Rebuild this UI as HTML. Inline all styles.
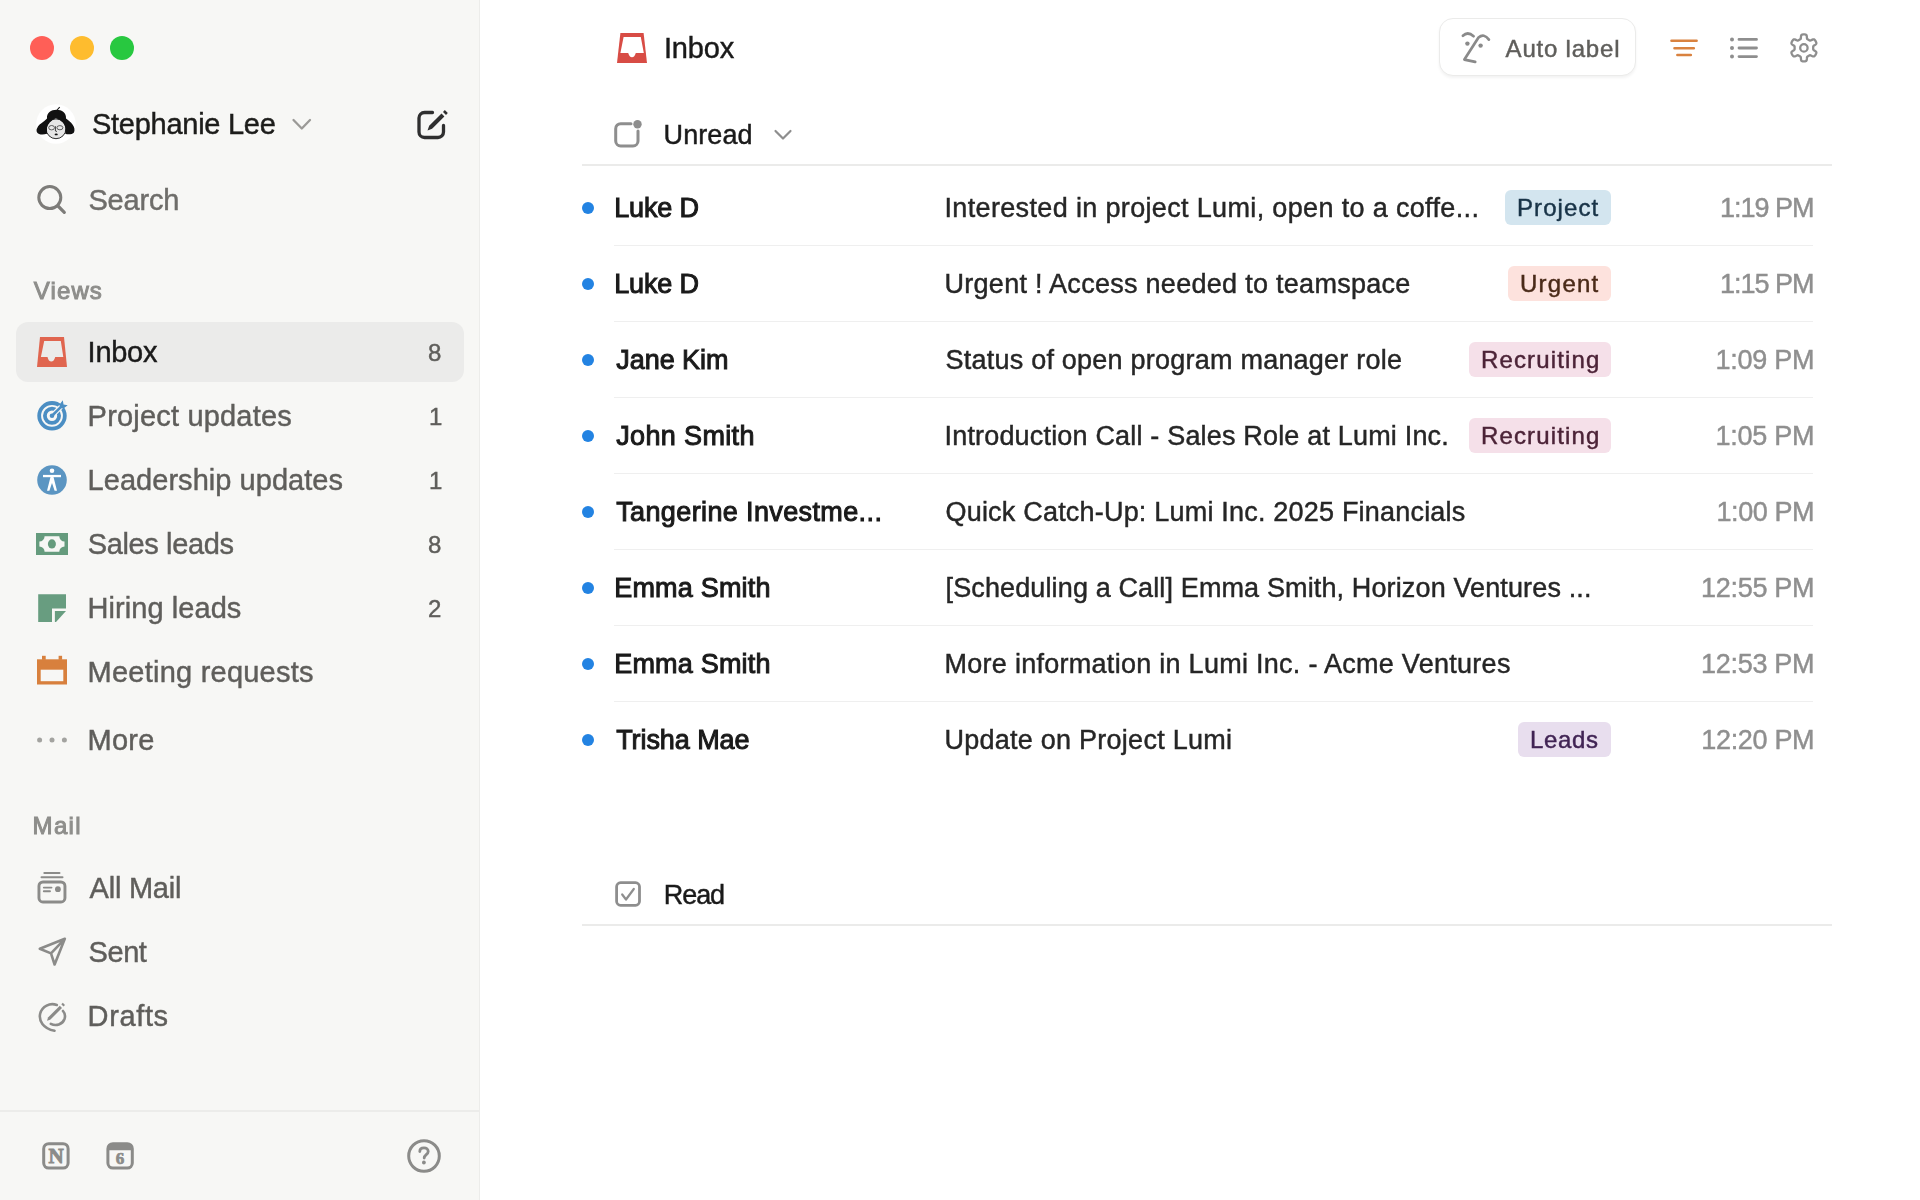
<!DOCTYPE html>
<html>
<head>
<meta charset="utf-8">
<title>Inbox</title>
<style>
html,body{margin:0;padding:0;width:1920px;height:1200px;overflow:hidden;background:#ffffff;}
body{position:relative;font-family:"Liberation Sans",sans-serif;}
.t{position:absolute;white-space:nowrap;font-family:"Liberation Sans",sans-serif;}
.bg{position:absolute;}
#sidebar{left:0;top:0;width:479px;height:1200px;background:#f7f7f5;}
#sideborder{left:479px;top:0;width:1px;height:1200px;background:#ececea;}
#sidesep{left:0;top:1110px;width:479px;height:2px;background:#ececea;}
#sel{left:16px;top:322px;width:448px;height:60px;border-radius:12px;background:#ebebea;}
#autobtn{left:1439px;top:18px;width:195px;height:55.5px;border-radius:14px;background:#fff;border:1.5px solid #ebebea;box-shadow:0 2px 3px rgba(0,0,0,0.05);}
.hline{position:absolute;left:582px;width:1250px;height:2px;background:#ebebea;}
.rline{position:absolute;left:614px;width:1199px;height:1px;background:#efefef;}
.dot{position:absolute;left:582px;width:12px;height:12px;border-radius:6px;background:#2383e2;}
.tag{position:absolute;height:35px;border-radius:6px;}
svg{position:absolute;left:0;top:0;}
</style>
</head>
<body>
<div class="bg" id="sidebar"></div>
<div class="bg" id="sideborder"></div>
<div class="bg" id="sidesep"></div>
<div class="bg" id="sel"></div>
<div class="bg" id="autobtn"></div>
<div class="hline" style="top:164px"></div>
<div class="hline" style="top:924px"></div>
<div class="dot" style="top:202px"></div>
<div class="rline" style="top:245px"></div>
<div class="tag" style="left:1505.0px;top:189.5px;width:105.8px;background:#d3e5ef"></div>
<div class="dot" style="top:278px"></div>
<div class="rline" style="top:321px"></div>
<div class="tag" style="left:1508.4px;top:265.5px;width:102.4px;background:#fde2dd"></div>
<div class="dot" style="top:354px"></div>
<div class="rline" style="top:397px"></div>
<div class="tag" style="left:1469.2px;top:341.5px;width:141.5px;background:#f5e0e9"></div>
<div class="dot" style="top:430px"></div>
<div class="rline" style="top:473px"></div>
<div class="tag" style="left:1469.2px;top:417.5px;width:141.5px;background:#f5e0e9"></div>
<div class="dot" style="top:506px"></div>
<div class="rline" style="top:549px"></div>
<div class="dot" style="top:582px"></div>
<div class="rline" style="top:625px"></div>
<div class="dot" style="top:658px"></div>
<div class="rline" style="top:701px"></div>
<div class="dot" style="top:734px"></div>
<div class="tag" style="left:1518.0px;top:721.5px;width:92.8px;background:#e8deee"></div>
<svg width="1920" height="1200" viewBox="0 0 1920 1200">
<!-- traffic lights -->
<circle cx="42" cy="48" r="12" fill="#ff5f57"/>
<circle cx="82" cy="48" r="12" fill="#febc2e"/>
<circle cx="122" cy="48" r="12" fill="#28c840"/>
<!-- avatar -->
<circle cx="56" cy="124" r="19.8" fill="#ffffff"/>
<ellipse cx="56" cy="128.8" rx="9.9" ry="9.9" fill="#e6e6e6" stroke="#151515" stroke-width="0.9"/>
<path d="M39 134 C36.5 133 36 130 37 128.5 C38 125 41 123.5 43 122 C45 120.5 46 119.5 47 118.5 C46.5 113 51 109.8 56.5 109.8 C62 109.8 66.5 113 66 118.5 C68 120 71 122 72.5 124.5 C74.5 127 75 130 74 132.5 C72.5 134.5 68 134.8 65.2 133.8 L65.4 127.5 C64.5 123 61 120 55.8 118.2 C51 120.5 48 123.5 47 127.5 L47 133.8 C44 134.8 41 134.8 39 134 Z" fill="#111"/>
<path d="M57.1 110 L59.7 107.1" stroke="#111" stroke-width="1.1" fill="none"/>
<ellipse cx="51.6" cy="127.7" rx="2.9" ry="2.2" fill="none" stroke="#333" stroke-width="0.75"/>
<ellipse cx="59.9" cy="127.7" rx="3" ry="2.1" fill="none" stroke="#333" stroke-width="0.75"/>
<path d="M55.6 126.2 L55.4 131 L57 131.5" stroke="#222" stroke-width="0.8" fill="none"/>
<ellipse cx="56.2" cy="134.4" rx="1.6" ry="0.85" fill="#111"/>
<!-- name chevron -->
<path d="M293.5 120 L301.8 128.5 L310 120" fill="none" stroke="#9b9a97" stroke-width="2.3" stroke-linecap="round" stroke-linejoin="round"/>
<!-- compose -->
<path d="M432.5 112.5 H424.5 a5.5 5.5 0 0 0 -5.5 5.5 V132 a5.5 5.5 0 0 0 5.5 5.5 H438 a5.5 5.5 0 0 0 5.5 -5.5 V125.5" fill="none" stroke="#2f2f2f" stroke-width="3.3" stroke-linecap="round"/>
<path d="M427.5 130.5 L429.2 125.8 L441.5 113.5 L444.4 116.4 L432.1 128.7 Z" fill="#2f2f2f"/>
<path d="M443 111.9 L444.8 110.1 L447.8 113.1 L446 114.9 Z" fill="#2f2f2f"/>
<!-- search -->
<circle cx="49.8" cy="197.6" r="11" fill="none" stroke="#7d7c79" stroke-width="3"/>
<path d="M58 206 L64.3 212.3" stroke="#7d7c79" stroke-width="3.2" stroke-linecap="round"/>
<!-- sidebar inbox icon -->
<path d="M40 337 H64 L67 367 H37 Z" fill="#e0654f"/>
<path d="M44.2 341 H60.8 L63.3 357 H55.2 Q54 361.5 51.3 361.5 Q48.6 361.5 47.5 357 H40.9 Z" fill="#ebebea"/>
<!-- project updates target -->
<circle cx="52" cy="415.8" r="12.8" fill="none" stroke="#4b8ec3" stroke-width="3.8"/>
<circle cx="52" cy="415.8" r="7.1" fill="none" stroke="#4b8ec3" stroke-width="3.8"/>
<path d="M54.5 413.3 L61 406.8" stroke="#f7f7f5" stroke-width="5" stroke-linecap="butt"/>
<circle cx="52" cy="415.8" r="2.3" fill="#4b8ec3"/>
<path d="M53.3 414.5 L61.5 406.3" stroke="#4b8ec3" stroke-width="2.5" stroke-linecap="round"/>
<path d="M59.8 404.2 L62.8 400.3 L63.5 404.5 L67.7 405.2 L63.8 408.2 L59.8 408.2 Z" fill="#4b8ec3"/>
<!-- leadership -->
<circle cx="52" cy="480" r="14.8" fill="#5b95c2"/>
<circle cx="52" cy="470.8" r="2.3" fill="#fff"/>
<rect x="43" y="474.9" width="18" height="2.3" fill="#fff"/>
<path d="M50.5 477 H53.5 L57 490.8 H54.6 L52 483 L49.4 490.8 H47 Z" fill="#fff"/>
<!-- sales leads -->
<rect x="36" y="533" width="32" height="22" fill="#659b7d"/>
<path d="M44.6 536.3 H59.3 A5.2 5.2 0 0 0 64.5 541.5 V546.5 A5.2 5.2 0 0 0 59.3 551.7 H44.6 A5.2 5.2 0 0 0 39.4 546.5 V541.5 A5.2 5.2 0 0 0 44.6 536.3 Z" fill="#f7f7f5"/>
<ellipse cx="51.9" cy="543.9" rx="4" ry="4.6" fill="#659b7d"/>
<!-- hiring leads -->
<path d="M38.2 594.2 H66 V608.4 H52 V622 H38.2 Z" fill="#689d80"/>
<path d="M54.9 611 H66 L56 622 H54.9 Z" fill="#689d80"/>
<!-- meeting requests -->
<rect x="37" y="659.3" width="30" height="25.2" fill="#d8803d"/>
<rect x="42" y="655.8" width="3.7" height="4" fill="#d8803d"/>
<rect x="58.6" y="655.8" width="3.5" height="4" fill="#d8803d"/>
<rect x="40.7" y="669.7" width="22.6" height="11.5" fill="#f7f7f5"/>
<!-- more -->
<circle cx="39.6" cy="740" r="2.5" fill="#a3a3a0"/>
<circle cx="52" cy="740" r="2.5" fill="#a3a3a0"/>
<circle cx="64.4" cy="740" r="2.5" fill="#a3a3a0"/>
<!-- all mail -->
<rect x="38.95" y="881.95" width="26" height="20" rx="4" fill="none" stroke="#8b8b89" stroke-width="2.9"/>
<path d="M41.5 877.3 H62.5" stroke="#8b8b89" stroke-width="2" stroke-linecap="round"/>
<path d="M44.3 873 H59.5" stroke="#8b8b89" stroke-width="2" stroke-linecap="round"/>
<path d="M43.8 887.6 H51.5 M43.8 891.2 H50" stroke="#8b8b89" stroke-width="1.9" stroke-linecap="round"/>
<circle cx="57.9" cy="889.2" r="2.9" fill="#8b8b89"/>
<!-- sent -->
<path d="M64.8 938.8 L39.8 948.8 L51 953.4 L54.6 964.5 Z M51 953.4 L64.8 938.8" fill="none" stroke="#8b8b89" stroke-width="2.6" stroke-linejoin="round" stroke-linecap="round"/>
<!-- drafts -->
<path d="M56.8 1005 A12.5 12.5 0 0 0 40.2 1013.5 C38.5 1020.5 43 1028.5 54.5 1030.8" fill="none" stroke="#8b8b89" stroke-width="2.6" stroke-linecap="round"/>
<path d="M50.8 1023.8 C56 1026.5 62.5 1024.5 64.5 1019 C65.5 1016 64.8 1013 63 1011" fill="none" stroke="#8b8b89" stroke-width="2.6" stroke-linecap="round"/>
<path d="M47 1020.8 L48 1017.6 L59.8 1005.8 L62 1008 L50.2 1019.8 Z" fill="#8b8b89"/>
<path d="M61.3 1004.3 L62.8 1002.8 L65 1005 L63.5 1006.5 Z" fill="#8b8b89"/>
<!-- bottom icons -->
<rect x="43.7" y="1143.7" width="24.4" height="24.4" rx="5" fill="none" stroke="#8b8b89" stroke-width="3"/>
<text x="56" y="1163" text-anchor="middle" style="font-family:'Liberation Serif';font-weight:700;font-size:21px" fill="#8b8b89" stroke="#8b8b89" stroke-width="0.9">N</text>
<rect x="107.9" y="1143.7" width="24.4" height="24.4" rx="5" fill="none" stroke="#8b8b89" stroke-width="3"/>
<path d="M107.9 1149 a5 5 0 0 1 5 -5.3 H127.3 a5 5 0 0 1 5 5.3 V1150.2 H107.9 Z" fill="#8b8b89"/>
<text x="120.1" y="1164.2" text-anchor="middle" style="font-family:'Liberation Serif';font-weight:700;font-size:17px" fill="#8b8b89" stroke="#8b8b89" stroke-width="0.7">6</text>
<circle cx="424" cy="1156" r="15.3" fill="none" stroke="#8b8b89" stroke-width="3"/>
<path d="M419.8 1151.5 C419.8 1149 421.8 1147.8 424 1147.8 C426.4 1147.8 428.2 1149.3 428.2 1151.5 C428.2 1154.5 424.2 1154.8 424.2 1158" fill="none" stroke="#8b8b89" stroke-width="2.8" stroke-linecap="round"/>
<circle cx="423.9" cy="1162.5" r="1.9" fill="#8b8b89"/>

<!-- header inbox icon -->
<path d="M620.4 33 H643.6 L647 63 H617 Z" fill="#d84c45"/>
<path d="M623.6 37 H640.8 L643.8 53 H635.8 Q634.6 57.2 632 57.2 Q629.4 57.2 628.2 53 H620.4 Z" fill="#ffffff"/>
<!-- auto label icon -->
<path d="M1462.9 35.7 Q1467.8 31 1473.6 36.2" fill="none" stroke="#8a8a8a" stroke-width="2.7" stroke-linecap="round"/>
<path d="M1488.9 39.6 Q1484 33 1478.5 37.5 L1464.4 59.6 L1475.2 61.9" fill="none" stroke="#8a8a8a" stroke-width="2.7" stroke-linecap="round" stroke-linejoin="round"/>
<circle cx="1467.4" cy="43.6" r="2.2" fill="#8a8a8a"/>
<circle cx="1480.6" cy="45.6" r="2.2" fill="#8a8a8a"/>
<!-- filter orange -->
<path d="M1671.5 40.8 H1696.6 M1674.5 48.2 H1693.8 M1677.4 55 H1690.8" stroke="#d9823f" stroke-width="2.6" stroke-linecap="round"/>
<!-- list -->
<circle cx="1732" cy="39.4" r="2" fill="#8e8e8e"/>
<circle cx="1732" cy="48" r="2" fill="#8e8e8e"/>
<circle cx="1732" cy="56.6" r="2" fill="#8e8e8e"/>
<path d="M1739 39.4 H1756.5 M1739 48 H1756.5 M1739 56.6 H1756.5" stroke="#8e8e8e" stroke-width="2.8" stroke-linecap="round"/>
<!-- gear -->
<path d="M1813.20 47.90 L1813.20 47.74 L1813.20 47.58 L1813.19 47.41 L1813.19 47.25 L1813.19 47.09 L1813.19 46.92 L1813.19 46.76 L1813.21 46.59 L1813.25 46.42 L1813.32 46.24 L1813.45 46.04 L1813.67 45.82 L1813.99 45.57 L1814.41 45.28 L1814.91 44.95 L1815.40 44.60 L1815.80 44.26 L1816.09 43.94 L1816.25 43.65 L1816.33 43.38 L1816.35 43.12 L1816.32 42.88 L1816.27 42.65 L1816.20 42.42 L1816.11 42.20 L1816.02 41.99 L1815.92 41.77 L1815.82 41.56 L1815.71 41.36 L1815.59 41.15 L1815.47 40.95 L1815.35 40.75 L1815.22 40.55 L1815.08 40.36 L1814.94 40.17 L1814.79 39.99 L1814.63 39.81 L1814.46 39.65 L1814.26 39.51 L1814.03 39.40 L1813.76 39.33 L1813.42 39.33 L1813.00 39.41 L1812.51 39.59 L1811.96 39.84 L1811.43 40.10 L1810.96 40.33 L1810.58 40.48 L1810.29 40.55 L1810.05 40.57 L1809.86 40.54 L1809.69 40.49 L1809.54 40.42 L1809.39 40.34 L1809.25 40.26 L1809.11 40.18 L1808.97 40.09 L1808.83 40.01 L1808.69 39.93 L1808.55 39.85 L1808.41 39.77 L1808.27 39.69 L1808.13 39.61 L1807.98 39.53 L1807.84 39.45 L1807.70 39.37 L1807.56 39.28 L1807.42 39.18 L1807.29 39.06 L1807.17 38.91 L1807.07 38.70 L1806.99 38.40 L1806.93 38.00 L1806.89 37.48 L1806.85 36.89 L1806.79 36.29 L1806.70 35.77 L1806.56 35.37 L1806.39 35.07 L1806.20 34.87 L1805.99 34.73 L1805.76 34.63 L1805.54 34.56 L1805.31 34.51 L1805.07 34.47 L1804.84 34.45 L1804.61 34.43 L1804.37 34.41 L1804.14 34.40 L1803.90 34.40 L1803.66 34.40 L1803.43 34.41 L1803.19 34.43 L1802.96 34.45 L1802.73 34.47 L1802.49 34.51 L1802.26 34.56 L1802.04 34.63 L1801.81 34.73 L1801.60 34.87 L1801.41 35.07 L1801.24 35.37 L1801.10 35.77 L1801.01 36.29 L1800.95 36.89 L1800.91 37.48 L1800.87 38.00 L1800.81 38.40 L1800.73 38.70 L1800.63 38.91 L1800.51 39.06 L1800.38 39.18 L1800.24 39.28 L1800.10 39.37 L1799.96 39.45 L1799.82 39.53 L1799.67 39.61 L1799.53 39.69 L1799.39 39.77 L1799.25 39.85 L1799.11 39.93 L1798.97 40.01 L1798.83 40.09 L1798.69 40.18 L1798.55 40.26 L1798.41 40.34 L1798.26 40.42 L1798.11 40.49 L1797.94 40.54 L1797.75 40.57 L1797.51 40.55 L1797.22 40.48 L1796.84 40.33 L1796.37 40.10 L1795.84 39.84 L1795.29 39.59 L1794.80 39.41 L1794.38 39.33 L1794.04 39.33 L1793.77 39.40 L1793.54 39.51 L1793.34 39.65 L1793.17 39.81 L1793.01 39.99 L1792.86 40.17 L1792.72 40.36 L1792.58 40.55 L1792.45 40.75 L1792.33 40.95 L1792.21 41.15 L1792.09 41.36 L1791.98 41.56 L1791.88 41.77 L1791.78 41.99 L1791.69 42.20 L1791.60 42.42 L1791.53 42.65 L1791.48 42.88 L1791.45 43.12 L1791.47 43.38 L1791.55 43.65 L1791.71 43.94 L1792.00 44.26 L1792.40 44.60 L1792.89 44.95 L1793.39 45.28 L1793.81 45.57 L1794.13 45.82 L1794.35 46.04 L1794.48 46.24 L1794.55 46.42 L1794.59 46.59 L1794.61 46.76 L1794.61 46.92 L1794.61 47.09 L1794.61 47.25 L1794.61 47.41 L1794.60 47.58 L1794.60 47.74 L1794.60 47.90 L1794.60 48.06 L1794.60 48.22 L1794.61 48.39 L1794.61 48.55 L1794.61 48.71 L1794.61 48.88 L1794.61 49.04 L1794.59 49.21 L1794.55 49.38 L1794.48 49.56 L1794.35 49.76 L1794.13 49.98 L1793.81 50.23 L1793.39 50.52 L1792.89 50.85 L1792.40 51.20 L1792.00 51.54 L1791.71 51.86 L1791.55 52.15 L1791.47 52.42 L1791.45 52.68 L1791.48 52.92 L1791.53 53.15 L1791.60 53.38 L1791.69 53.60 L1791.78 53.81 L1791.88 54.03 L1791.98 54.24 L1792.09 54.44 L1792.21 54.65 L1792.33 54.85 L1792.45 55.05 L1792.58 55.25 L1792.72 55.44 L1792.86 55.63 L1793.01 55.81 L1793.17 55.99 L1793.34 56.15 L1793.54 56.29 L1793.77 56.40 L1794.04 56.47 L1794.38 56.47 L1794.80 56.39 L1795.29 56.21 L1795.84 55.96 L1796.37 55.70 L1796.84 55.47 L1797.22 55.32 L1797.51 55.25 L1797.75 55.23 L1797.94 55.26 L1798.11 55.31 L1798.26 55.38 L1798.41 55.46 L1798.55 55.54 L1798.69 55.62 L1798.83 55.71 L1798.97 55.79 L1799.11 55.87 L1799.25 55.95 L1799.39 56.03 L1799.53 56.11 L1799.67 56.19 L1799.82 56.27 L1799.96 56.35 L1800.10 56.43 L1800.24 56.52 L1800.38 56.62 L1800.51 56.74 L1800.63 56.89 L1800.73 57.10 L1800.81 57.40 L1800.87 57.80 L1800.91 58.32 L1800.95 58.91 L1801.01 59.51 L1801.10 60.03 L1801.24 60.43 L1801.41 60.73 L1801.60 60.93 L1801.81 61.07 L1802.04 61.17 L1802.26 61.24 L1802.49 61.29 L1802.73 61.33 L1802.96 61.35 L1803.19 61.37 L1803.43 61.39 L1803.66 61.40 L1803.90 61.40 L1804.14 61.40 L1804.37 61.39 L1804.61 61.37 L1804.84 61.35 L1805.07 61.33 L1805.31 61.29 L1805.54 61.24 L1805.76 61.17 L1805.99 61.07 L1806.20 60.93 L1806.39 60.73 L1806.56 60.43 L1806.70 60.03 L1806.79 59.51 L1806.85 58.91 L1806.89 58.32 L1806.93 57.80 L1806.99 57.40 L1807.07 57.10 L1807.17 56.89 L1807.29 56.74 L1807.42 56.62 L1807.56 56.52 L1807.70 56.43 L1807.84 56.35 L1807.98 56.27 L1808.13 56.19 L1808.27 56.11 L1808.41 56.03 L1808.55 55.95 L1808.69 55.87 L1808.83 55.79 L1808.97 55.71 L1809.11 55.62 L1809.25 55.54 L1809.39 55.46 L1809.54 55.38 L1809.69 55.31 L1809.86 55.26 L1810.05 55.23 L1810.29 55.25 L1810.58 55.32 L1810.96 55.47 L1811.43 55.70 L1811.96 55.96 L1812.51 56.21 L1813.00 56.39 L1813.42 56.47 L1813.76 56.47 L1814.03 56.40 L1814.26 56.29 L1814.46 56.15 L1814.63 55.99 L1814.79 55.81 L1814.94 55.63 L1815.08 55.44 L1815.22 55.25 L1815.35 55.05 L1815.47 54.85 L1815.59 54.65 L1815.71 54.44 L1815.82 54.24 L1815.92 54.03 L1816.02 53.81 L1816.11 53.60 L1816.20 53.38 L1816.27 53.15 L1816.32 52.92 L1816.35 52.68 L1816.33 52.42 L1816.25 52.15 L1816.09 51.86 L1815.80 51.54 L1815.40 51.20 L1814.91 50.85 L1814.41 50.52 L1813.99 50.23 L1813.67 49.98 L1813.45 49.76 L1813.32 49.56 L1813.25 49.38 L1813.21 49.21 L1813.19 49.04 L1813.19 48.88 L1813.19 48.71 L1813.19 48.55 L1813.19 48.39 L1813.20 48.22 L1813.20 48.06Z" fill="none" stroke="#8e8e8e" stroke-width="2.3" stroke-linejoin="round"/>
<circle cx="1803.9" cy="47.9" r="3.7" fill="none" stroke="#8e8e8e" stroke-width="2.3"/>
<!-- unread icon -->
<path d="M631 123.7 H620.7 a5 5 0 0 0 -5 5 V141 a5 5 0 0 0 5 5 H633 a5 5 0 0 0 5 -5 V131" fill="none" stroke="#8e8e8e" stroke-width="3" stroke-linecap="round"/>
<circle cx="637.5" cy="124.3" r="4.2" fill="#8e8e8e"/>
<path d="M775.5 131 L783 138.5 L790.5 131" fill="none" stroke="#8e8e8e" stroke-width="2.2" stroke-linecap="round" stroke-linejoin="round"/>
<!-- read icon -->
<rect x="616.6" y="882.7" width="22.9" height="22.6" rx="4" fill="none" stroke="#8e8e8e" stroke-width="2.8"/>
<path d="M622.2 894.5 L626 899.5 L633.8 889" fill="none" stroke="#8e8e8e" stroke-width="2.2" stroke-linecap="round" stroke-linejoin="round"/>
</svg>
<div id="txt" style="position:absolute;left:0;top:0;width:1920px;height:1200px;will-change:transform">
<div class="t" id="name" style="left:91.90px;top:110.00px;font-size:29px;line-height:29px;letter-spacing:-0.258px;color:#1d1d1b;-webkit-text-stroke:0.45px #1d1d1b">Stephanie Lee</div>
<div class="t" id="search" style="left:88.40px;top:186.00px;font-size:29px;line-height:29px;letter-spacing:-0.180px;color:#6e6d6a;-webkit-text-stroke:0.45px #6e6d6a">Search</div>
<div class="t" id="views" style="left:33.75px;top:279.00px;font-size:24px;line-height:24px;letter-spacing:1.125px;color:#8e8e8b;-webkit-text-stroke:1.00px #8e8e8b">Views</div>
<div class="t" id="inbox" style="left:87.60px;top:338.00px;font-size:29px;line-height:29px;letter-spacing:-0.275px;color:#1a1a1a;-webkit-text-stroke:0.45px #1a1a1a">Inbox</div>
<div class="t" id="inbox_n" style="left:428.00px;top:341.00px;font-size:24px;line-height:24px;letter-spacing:0.000px;color:#5f5e5b;-webkit-text-stroke:0.45px #5f5e5b">8</div>
<div class="t" id="proj" style="left:87.60px;top:402.00px;font-size:29px;line-height:29px;letter-spacing:0.189px;color:#5f5e5b;-webkit-text-stroke:0.45px #5f5e5b">Project updates</div>
<div class="t" id="proj_n" style="left:429.00px;top:405.00px;font-size:24px;line-height:24px;letter-spacing:0.000px;color:#5f5e5b;-webkit-text-stroke:0.45px #5f5e5b">1</div>
<div class="t" id="lead" style="left:87.60px;top:466.00px;font-size:29px;line-height:29px;letter-spacing:0.038px;color:#5f5e5b;-webkit-text-stroke:0.45px #5f5e5b">Leadership updates</div>
<div class="t" id="lead_n" style="left:429.00px;top:469.00px;font-size:24px;line-height:24px;letter-spacing:0.000px;color:#5f5e5b;-webkit-text-stroke:0.45px #5f5e5b">1</div>
<div class="t" id="sales" style="left:87.75px;top:530.00px;font-size:29px;line-height:29px;letter-spacing:-0.375px;color:#5f5e5b;-webkit-text-stroke:0.45px #5f5e5b">Sales leads</div>
<div class="t" id="sales_n" style="left:428.00px;top:533.00px;font-size:24px;line-height:24px;letter-spacing:0.000px;color:#5f5e5b;-webkit-text-stroke:0.45px #5f5e5b">8</div>
<div class="t" id="hiring" style="left:87.60px;top:594.00px;font-size:29px;line-height:29px;letter-spacing:0.059px;color:#5f5e5b;-webkit-text-stroke:0.45px #5f5e5b">Hiring leads</div>
<div class="t" id="hiring_n" style="left:428.00px;top:597.00px;font-size:24px;line-height:24px;letter-spacing:0.000px;color:#5f5e5b;-webkit-text-stroke:0.45px #5f5e5b">2</div>
<div class="t" id="meet" style="left:87.60px;top:658.00px;font-size:29px;line-height:29px;letter-spacing:0.227px;color:#5f5e5b;-webkit-text-stroke:0.45px #5f5e5b">Meeting requests</div>
<div class="t" id="more" style="left:87.60px;top:726.00px;font-size:29px;line-height:29px;letter-spacing:0.217px;color:#5f5e5b;-webkit-text-stroke:0.45px #5f5e5b">More</div>
<div class="t" id="mail" style="left:32.60px;top:814.00px;font-size:24px;line-height:24px;letter-spacing:1.333px;color:#8e8e8b;-webkit-text-stroke:1.00px #8e8e8b">Mail</div>
<div class="t" id="allmail" style="left:89.60px;top:874.00px;font-size:29px;line-height:29px;letter-spacing:-0.243px;color:#5f5e5b;-webkit-text-stroke:0.45px #5f5e5b">All Mail</div>
<div class="t" id="sent" style="left:88.60px;top:938.00px;font-size:29px;line-height:29px;letter-spacing:-0.450px;color:#5f5e5b;-webkit-text-stroke:0.45px #5f5e5b">Sent</div>
<div class="t" id="drafts" style="left:87.60px;top:1002.00px;font-size:29px;line-height:29px;letter-spacing:0.630px;color:#5f5e5b;-webkit-text-stroke:0.45px #5f5e5b">Drafts</div>
<div class="t" id="h_inbox" style="left:664.00px;top:34.00px;font-size:29px;line-height:29px;letter-spacing:-0.188px;color:#1a1a1a;-webkit-text-stroke:0.45px #1a1a1a">Inbox</div>
<div class="t" id="autolabel" style="left:1505.60px;top:37.00px;font-size:24px;line-height:24px;letter-spacing:0.794px;color:#5f5e5b;-webkit-text-stroke:0.45px #5f5e5b">Auto label</div>
<div class="t" id="unread" style="left:663.60px;top:122.00px;font-size:27px;line-height:27px;letter-spacing:0.080px;color:#1a1a1a;-webkit-text-stroke:0.45px #1a1a1a">Unread</div>
<div class="t" id="read" style="left:663.70px;top:882.00px;font-size:27px;line-height:27px;letter-spacing:-1.033px;color:#1a1a1a;-webkit-text-stroke:0.45px #1a1a1a">Read</div>
<div class="t" id="n0" style="left:614.20px;top:195.00px;font-size:27px;line-height:27px;letter-spacing:-0.140px;color:#1a1a1a;-webkit-text-stroke:1.00px #1a1a1a">Luke D</div>
<div class="t" id="s0" style="left:944.50px;top:195.00px;font-size:27px;line-height:27px;letter-spacing:0.346px;color:#262626;-webkit-text-stroke:0.45px #262626">Interested in project Lumi, open to a coffe...</div>
<div class="t" id="t0" style="left:1720.00px;top:195.00px;font-size:27px;line-height:27px;letter-spacing:-1.000px;color:#8f8f8f;-webkit-text-stroke:0.45px #8f8f8f">1:19 PM</div>
<div class="t" id="g0" style="left:1517.00px;top:196.00px;font-size:24px;line-height:24px;letter-spacing:1.075px;color:#183347;-webkit-text-stroke:0.45px #183347">Project</div>
<div class="t" id="n1" style="left:614.20px;top:271.00px;font-size:27px;line-height:27px;letter-spacing:-0.140px;color:#1a1a1a;-webkit-text-stroke:1.00px #1a1a1a">Luke D</div>
<div class="t" id="s1" style="left:944.50px;top:271.00px;font-size:27px;line-height:27px;letter-spacing:0.281px;color:#262626;-webkit-text-stroke:0.45px #262626">Urgent ! Access needed to teamspace</div>
<div class="t" id="t1" style="left:1720.00px;top:271.00px;font-size:27px;line-height:27px;letter-spacing:-1.000px;color:#8f8f8f;-webkit-text-stroke:0.45px #8f8f8f">1:15 PM</div>
<div class="t" id="g1" style="left:1520.00px;top:272.00px;font-size:24px;line-height:24px;letter-spacing:1.240px;color:#4a2a18;-webkit-text-stroke:0.45px #4a2a18">Urgent</div>
<div class="t" id="n2" style="left:616.20px;top:347.00px;font-size:27px;line-height:27px;letter-spacing:-0.029px;color:#1a1a1a;-webkit-text-stroke:1.00px #1a1a1a">Jane Kim</div>
<div class="t" id="s2" style="left:945.50px;top:347.00px;font-size:27px;line-height:27px;letter-spacing:0.228px;color:#262626;-webkit-text-stroke:0.45px #262626">Status of open program manager role</div>
<div class="t" id="t2" style="left:1715.50px;top:347.00px;font-size:27px;line-height:27px;letter-spacing:-0.250px;color:#8f8f8f;-webkit-text-stroke:0.45px #8f8f8f">1:09 PM</div>
<div class="t" id="g2" style="left:1481.00px;top:348.00px;font-size:24px;line-height:24px;letter-spacing:1.133px;color:#4c2337;-webkit-text-stroke:0.45px #4c2337">Recruiting</div>
<div class="t" id="n3" style="left:616.20px;top:423.00px;font-size:27px;line-height:27px;letter-spacing:0.356px;color:#1a1a1a;-webkit-text-stroke:1.00px #1a1a1a">John Smith</div>
<div class="t" id="s3" style="left:944.50px;top:423.00px;font-size:27px;line-height:27px;letter-spacing:0.180px;color:#262626;-webkit-text-stroke:0.45px #262626">Introduction Call - Sales Role at Lumi Inc.</div>
<div class="t" id="t3" style="left:1715.50px;top:423.00px;font-size:27px;line-height:27px;letter-spacing:-0.250px;color:#8f8f8f;-webkit-text-stroke:0.45px #8f8f8f">1:05 PM</div>
<div class="t" id="g3" style="left:1481.00px;top:424.00px;font-size:24px;line-height:24px;letter-spacing:1.133px;color:#4c2337;-webkit-text-stroke:0.45px #4c2337">Recruiting</div>
<div class="t" id="n4" style="left:616.20px;top:499.00px;font-size:27px;line-height:27px;letter-spacing:0.378px;color:#1a1a1a;-webkit-text-stroke:1.00px #1a1a1a">Tangerine Investme...</div>
<div class="t" id="s4" style="left:945.50px;top:499.00px;font-size:27px;line-height:27px;letter-spacing:0.201px;color:#262626;-webkit-text-stroke:0.45px #262626">Quick Catch-Up: Lumi Inc. 2025 Financials</div>
<div class="t" id="t4" style="left:1716.50px;top:499.00px;font-size:27px;line-height:27px;letter-spacing:-0.417px;color:#8f8f8f;-webkit-text-stroke:0.45px #8f8f8f">1:00 PM</div>
<div class="t" id="n5" style="left:614.20px;top:575.00px;font-size:27px;line-height:27px;letter-spacing:0.200px;color:#1a1a1a;-webkit-text-stroke:1.00px #1a1a1a">Emma Smith</div>
<div class="t" id="s5" style="left:945.50px;top:575.00px;font-size:27px;line-height:27px;letter-spacing:0.130px;color:#262626;-webkit-text-stroke:0.45px #262626">[Scheduling a Call] Emma Smith, Horizon Ventures ...</div>
<div class="t" id="t5" style="left:1701.00px;top:575.00px;font-size:27px;line-height:27px;letter-spacing:-0.286px;color:#8f8f8f;-webkit-text-stroke:0.45px #8f8f8f">12:55 PM</div>
<div class="t" id="n6" style="left:614.20px;top:651.00px;font-size:27px;line-height:27px;letter-spacing:0.200px;color:#1a1a1a;-webkit-text-stroke:1.00px #1a1a1a">Emma Smith</div>
<div class="t" id="s6" style="left:944.50px;top:651.00px;font-size:27px;line-height:27px;letter-spacing:0.276px;color:#262626;-webkit-text-stroke:0.45px #262626">More information in Lumi Inc. - Acme Ventures</div>
<div class="t" id="t6" style="left:1701.00px;top:651.00px;font-size:27px;line-height:27px;letter-spacing:-0.286px;color:#8f8f8f;-webkit-text-stroke:0.45px #8f8f8f">12:53 PM</div>
<div class="t" id="n7" style="left:616.20px;top:727.00px;font-size:27px;line-height:27px;letter-spacing:-0.078px;color:#1a1a1a;-webkit-text-stroke:1.00px #1a1a1a">Trisha Mae</div>
<div class="t" id="s7" style="left:944.50px;top:727.00px;font-size:27px;line-height:27px;letter-spacing:0.250px;color:#262626;-webkit-text-stroke:0.45px #262626">Update on Project Lumi</div>
<div class="t" id="t7" style="left:1701.30px;top:727.00px;font-size:27px;line-height:27px;letter-spacing:-0.329px;color:#8f8f8f;-webkit-text-stroke:0.45px #8f8f8f">12:20 PM</div>
<div class="t" id="g7" style="left:1530.00px;top:728.00px;font-size:24px;line-height:24px;letter-spacing:0.675px;color:#412454;-webkit-text-stroke:0.45px #412454">Leads</div>
</div>
</body>
</html>
